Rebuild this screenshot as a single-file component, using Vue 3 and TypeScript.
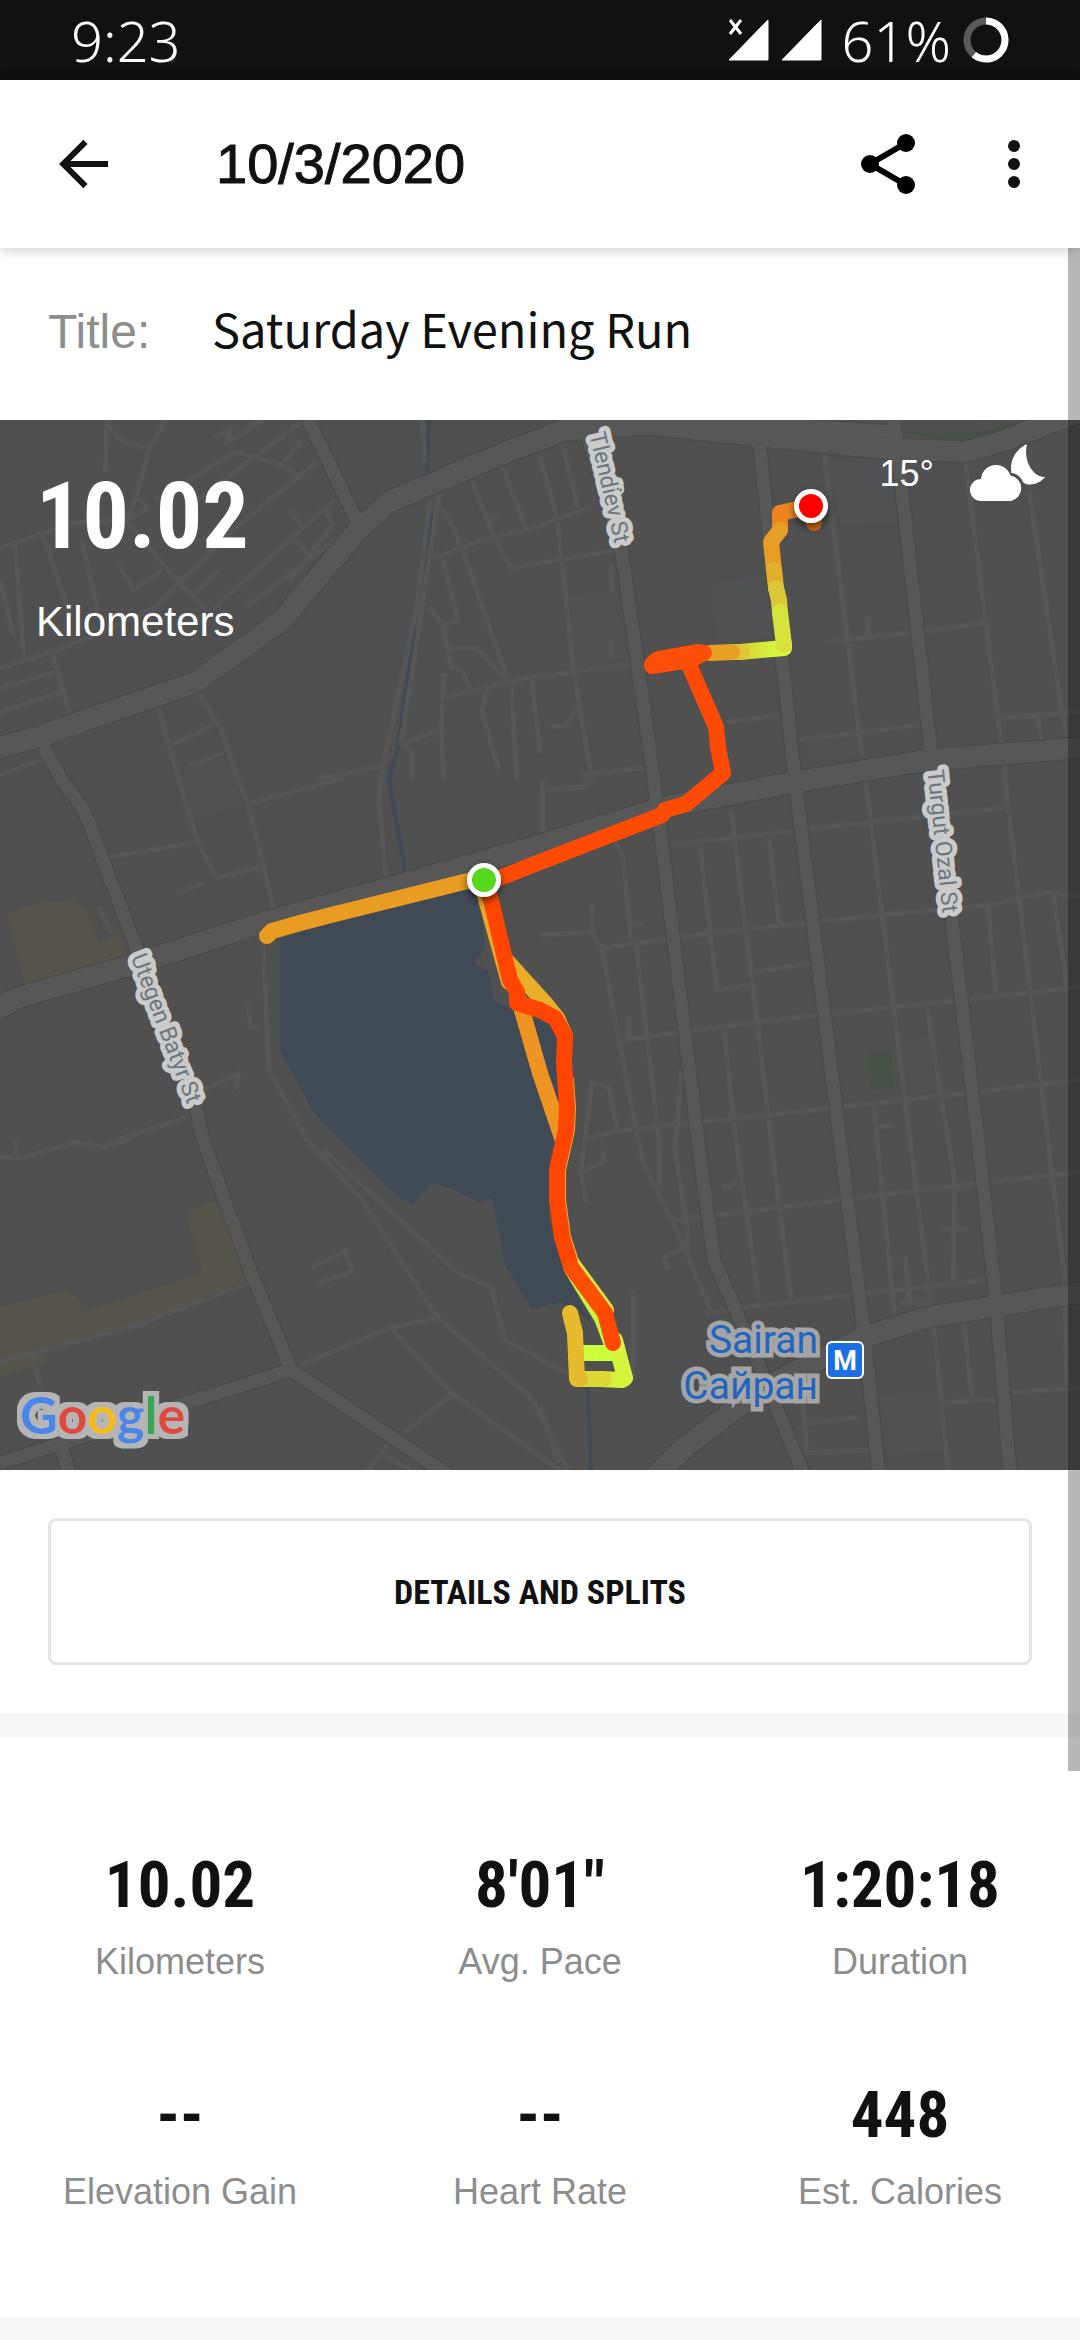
<script setup lang="ts">
import { ref } from 'vue'

interface Stat {
  value: string
  label: string
}

interface Area {
  points: string
  fill: string
}

interface Segment {
  points: string
  color: string
}

const runTitle = ref('Saturday Evening Run')

const stats: Stat[] = [
  { value: '10.02', label: 'Kilometers' },
  { value: '8\'01"', label: 'Avg. Pace' },
  { value: '1:20:18', label: 'Duration' },
  { value: '--', label: 'Elevation Gain' },
  { value: '--', label: 'Heart Rate' },
  { value: '448', label: 'Est. Calories' },
]

const areas: Area[] = [
  { fill: '#57544c', points: '7,913 41,902 72,900 86,910 98,943 121,933 127,957 26,987' },
  {
    fill: '#57544c',
    points: '189,1210 207,1202 219,1203 246,1280 131,1327 0,1360 0,1307 65,1290 77,1297 84,1312 203,1273 189,1223',
  },
  { fill: '#57544c', points: '0,1377 46,1362 45,1353 0,1363' },
  { fill: '#465046', points: '902,432 965,444 1040,424 1050,418 1030,418 978,432' },
  { fill: '#465046', points: '869,1053 891,1052 895,1087 872,1089' },
  { fill: '#4f5153', points: '829,460 892,455 898,523 840,526' },
  { fill: '#4f5153', points: '568,595 621,590 630,660 577,667' },
  { fill: '#4f5153', points: '709,582 770,576 776,636 718,643' },
  { fill: '#4f5153', points: '805,742 855,736 857,756 808,765' },
  { fill: '#4f5153', points: '182,768 226,757 248,805 192,820' },
  { fill: '#4f5153', points: '903,1040 930,1035 936,1090 909,1096' },
  { fill: '#4f5153', points: '880,1395 938,1390 944,1450 888,1456' },
  {
    fill: '#3f4a55',
    points:
      '280,938 480,880 482,917 485,947 474,963 487,970 496,1002 517,1010 554,1027 557,1047 560,1100 550,1160 549,1223 566,1273 592,1325 578,1310 561,1302 540,1307 532,1310 505,1265 492,1198 480,1203 451,1188 432,1183 412,1205 396,1195 341,1140 312,1110 280,1050',
  },
]

const canals: string[] = [
  '429,420 427,472',
  '432,515 420,597 398,747 389,780 406,877',
  '588,1387 591,1470',
]

const lanes: string[] = [
  '107,420 105,472', '108,427 124,442 150,448', '165,420 150,448 136,497 126,520',
  '0,548 72,523 126,520 148,508 136,497', '15,545 24,658', '43,535 69,612', '82,540 98,613',
  '0,580 14,637', '0,668 52,652 96,635 155,607 177,585 241,523 317,462', '52,653 71,717',
  '0,688 55,672', '0,712 62,692', '126,520 179,583 207,610', '117,563 134,590 162,570',
  '155,500 236,452 281,465 301,442', '281,465 298,475', '193,503 300,423',
  '215,607 293,537 334,500', '246,607 351,528', '289,510 303,527', '293,537 312,560',
  '325,507 332,525 289,583', '191,597 220,570', '215,438 231,428 227,443 262,420',
  '422,420 425,463', '439,493 413,667 401,743 412,752 412,780',
  '430,500 417,607 382,770 379,800 386,880', '441,507 455,530 461,550',
  '434,558 482,540 540,527', '443,560 458,620 443,625 429,607', '463,552 508,680',
  '448,648 477,648 508,682 540,675', '446,697 506,683', '443,627 451,667 461,670 470,688',
  '444,673 441,730 444,780', '405,743 439,730', '486,690 482,713 499,770', '511,683 517,780',
  '532,680 540,753', '472,480 492,533 511,568 540,563', '503,467 525,527', '487,520 498,518',
  '158,707 179,780 198,843 217,878 260,867', '196,690 220,727 238,780 248,803 274,910',
  '172,745 213,725', '191,765 224,753', '0,775 41,760', '317,778 382,767',
  '110,857 198,842', '251,803 344,778', '176,893 205,883', '98,907 112,933',
  '263,943 269,1070 307,1140 362,1200 437,1317 530,1397 540,1415 568,1470',
  '324,1150 458,1273 491,1287 505,1340 568,1373', '296,1367 389,1328 437,1318',
  '393,1330 451,1393 560,1470', '451,1395 405,1432', '389,1443 368,1470', '385,1455 410,1470',
  '248,1003 250,1027 260,1027', '203,1090 239,1073 236,1090', '117,1140 188,1117',
  '0,1157 21,1158 77,1142 103,1147 131,1138', '15,1140 17,1157', '0,1362 138,1325 248,1283',
  '31,1353 41,1388', '312,1267 343,1253', '343,1247 353,1272 317,1283',
  '562,443 578,507', '540,457 557,517 574,673 592,780', '540,525 592,507', '540,563 617,550',
  '611,563 612,592', '611,638 611,660', '540,677 633,663', '578,707 566,725 550,727',
  '581,775 643,768', '824,452 862,757', '965,457 1001,743', '1029,490 1065,733',
  '826,642 908,633 986,623', '867,617 869,637', '726,722 779,715', '798,740 920,725',
  '1001,718 1080,712', '1038,717 1041,740', '1005,765 1005,780 1048,1140 1065,1283',
  '540,790 585,787 590,780', '543,780 543,835', '865,775 910,1140 931,1303',
  '671,845 871,822 1005,808', '602,948 712,933 805,923 881,915 988,905 1050,892 1080,897',
  '623,1040 757,1022 895,1007 1080,987', '588,1138 623,1130 767,1115 905,1100 1080,1080',
  '731,810 757,1020 771,1140 791,1300', '700,847 717,990 752,985', '769,838 779,923',
  '754,972 812,963', '616,843 623,857 631,940', '631,925 643,923',
  '592,905 592,933 602,950 638,1140 643,1163 678,1233 712,1313', '540,935 592,932',
  '636,943 659,1140 660,1180 657,1193', '629,1017 629,1040', '724,1030 736,1140 759,1300',
  '988,907 996,993', '1053,893 1067,987', '927,1007 955,1183 953,1280',
  '586,1203 581,1170 592,1083 609,1087 617,1130', '603,1150 604,1162 583,1171',
  '681,1070 675,1150 688,1233 688,1253', '669,1270 664,1257 688,1247', '874,1107 877,1140 895,1317',
  '674,1220 745,1212 840,1200 919,1190 1080,1172', '705,1313 747,1307 850,1295 988,1280',
  '939,1229 969,1229', '905,1255 910,1303', '900,1303 933,1303', '633,1290 633,1380',
  '934,1327 941,1400 948,1470', '945,1402 996,1400', '964,1322 972,1400', '1012,1392 1080,1388',
  '1065,1303 1067,1387', '809,1423 859,1417', '803,1403 807,1453 871,1450', '540,1360 568,1373',
  '540,1407 559,1463', '722,1188 739,1183', '876,1127 894,1125',
]

const streets: string[] = [
  '308,420 358,523',
  '43,746 62,780 84,810 136,947 196,1107 203,1140 251,1273 282,1347 291,1370 448,1475',
  '291,1370 186,1403 0,1463',
  '60,1443 69,1472',
  '585,428 621,547 654,780 698,1140 714,1260 760,1367 804,1475',
  '757,420 795,780 840,1140 864,1333 879,1475',
  '894,420 931,753 951,913 978,1140 996,1300 1010,1475',
  '700,420 898,432',
]

const avenues: string[] = [
  '-10,750 38,737 72,725 196,682 282,620 358,530 389,502 499,455 565,430 650,424 750,435 880,448 965,452 1000,442 1090,408',
  '-10,1014 17,998 131,965 272,920 406,883 540,845 664,807 795,782 929,760 1090,747',
  '655,1477 685,1447 760,1390 864,1337 929,1317 1090,1291',
]

const underRoute: Segment[] = [
  { color: '#e8a828', points: '482,885 509,982' },
  { color: '#e8ae28', points: '506,960 545,1003 557,1018 565,1036' },
  { color: '#ed9422', points: '519,1000 540,1073 562,1138' },
  { color: '#eab02c', points: '566,1080 568,1108 567,1130 558,1170 558,1200 563,1237 572,1265' },
  { color: '#dfe83c', points: '573,1265 606,1310' },
  { color: '#ccf43c', points: '571,1267 602,1318 614,1350' },
  { color: '#ccff3c', points: '580,1353 617,1353' },
  { color: '#d4f43c', points: '615,1340 625,1378' },
  { color: '#d4f43c', points: '625,1378 622,1380 600,1379' },
  { color: '#dcd836', points: '604,1379 578,1379' },
  { color: '#e6bc2e', points: '580,1379 577,1379 575,1333 570,1313' },
]

const mainRoute: Segment[] = [
  { color: '#e99c22', points: '484,877 331,915 300,923 272,931 267,936' },
  {
    color: '#ff4500',
    points:
      '484,880 491,900 510,980 517,992 517,1003 540,1010 555,1018 565,1036 564,1063 567,1107 566,1130 557,1170 557,1200 562,1237 571,1267',
  },
  { color: '#fb5004', points: '571,1267 605,1313' },
  { color: '#ff4800', points: '605,1313 613,1343' },
  {
    color: '#ff4a04',
    points: '484,884 540,862 662,815 665,810 686,804 723,773 718,747 716,727 690,667',
  },
]

const upperRoute: Segment[] = [
  { color: '#d06a1c', points: '811,508 814,523' },
  { color: '#f06c18', points: '811,508 793,510' },
  { color: '#ee8420', points: '793,510 780,513 780,530' },
  { color: '#e69e24', points: '780,530 771,542 774,570' },
  { color: '#e0b02c', points: '774,570 776,588' },
  { color: '#dcc834', points: '776,588 779,600 780,612' },
  { color: '#d8e23c', points: '780,612 784,645' },
  { color: '#dcc834', points: '732,652 742,652' },
  { color: '#e8a024', points: '710,653 732,652' },
  { color: '#ff4e08', points: '652,666 690,660 704,653 697,652 658,659 652,664' },
]
</script>

<template>
  <div class="page">
    <div class="status">
      <span class="clock">9:23</span>
      <div class="status-right">
        <svg class="signals" viewBox="0 0 94 42" aria-hidden="true">
          <path d="M40 1V41H1z M93 1V41H54z" fill="#fff" stroke="#fff" stroke-linejoin="round" />
          <path d="M2 1l11 14M13 1L2 15" stroke="#fff" stroke-width="3" />
        </svg>
        <span class="battery">61%</span>
        <svg class="ring" viewBox="0 0 46 46" aria-hidden="true">
          <circle cx="23" cy="23" r="19" fill="none" stroke="#5a5a5a" stroke-width="7" />
          <circle
            cx="23" cy="23" r="19" fill="none" stroke="#fff" stroke-width="7"
            pathLength="100" stroke-dasharray="61 39" transform="rotate(-90 23 23)"
          />
        </svg>
      </div>
    </div>

    <header class="bar">
      <button class="icon" type="button" aria-label="Back">
        <svg viewBox="0 0 24 24">
          <path d="M12.5 4.6L5.1 12l7.4 7.4M5.1 12H20" fill="none" stroke="#111" stroke-width="2" />
        </svg>
      </button>
      <h1 class="date">10/3/2020</h1>
      <button class="icon" type="button" aria-label="Share">
        <svg viewBox="0 0 24 24">
          <path d="M18 5L6 12l12 7" fill="none" stroke="#000" stroke-width="2" />
          <circle cx="18" cy="5" r="3" />
          <circle cx="6" cy="12" r="3" />
          <circle cx="18" cy="19" r="3" />
        </svg>
      </button>
      <button class="icon more" type="button" aria-label="More options">
        <svg viewBox="0 0 24 24" fill="#111">
          <circle cx="12" cy="6" r="2" />
          <circle cx="12" cy="12" r="2" />
          <circle cx="12" cy="18" r="2" />
        </svg>
      </button>
    </header>

    <main class="content">
      <div class="title-row">
        <label class="title-label" for="run-title">Title:</label>
        <input id="run-title" v-model="runTitle" class="title-input" type="text" />
      </div>

      <section class="map">
        <svg class="map-art" viewBox="0 420 1080 1050" aria-label="Route map">
          <defs>
            <filter id="halo" x="-20%" y="-30%" width="140%" height="160%">
              <feMorphology in="SourceAlpha" operator="dilate" radius="5" result="grown" />
              <feFlood flood-color="#b5b5b5" />
              <feComposite in2="grown" operator="in" result="edge" />
              <feMerge>
                <feMergeNode in="edge" />
                <feMergeNode in="SourceGraphic" />
              </feMerge>
            </filter>
            <filter id="drop" x="-40%" y="-40%" width="180%" height="190%">
              <feDropShadow dx="0" dy="4" stdDeviation="4" flood-color="#000" flood-opacity="0.6" />
            </filter>
            <linearGradient id="east" gradientUnits="userSpaceOnUse" x1="740" y1="652" x2="784" y2="647">
              <stop offset="0" stop-color="#dcd034" />
              <stop offset="1" stop-color="#d2ff3e" />
            </linearGradient>
          </defs>

          <rect x="0" y="420" width="1080" height="1050" fill="#505050" />
          <polygon v-for="(a, i) in areas" :key="`a${i}`" :points="a.points" :fill="a.fill" />
          <g class="line canal">
            <polyline v-for="(p, i) in canals" :key="i" :points="p" />
          </g>
          <g class="line lane">
            <polyline v-for="(p, i) in lanes" :key="i" :points="p" />
          </g>
          <g class="line street-edge">
            <polyline v-for="(p, i) in streets" :key="i" :points="p" />
          </g>
          <g class="line avenue-edge">
            <polyline v-for="(p, i) in avenues" :key="i" :points="p" />
          </g>
          <g class="line street">
            <polyline v-for="(p, i) in streets" :key="i" :points="p" />
          </g>
          <g class="line avenue">
            <polyline v-for="(p, i) in avenues" :key="i" :points="p" />
          </g>

          <g class="road-name">
            <text transform="translate(602 489) rotate(77)">Tlendiev St</text>
            <text transform="translate(159 1031) rotate(69)">Utegen Batyr St</text>
            <text transform="translate(935 842) rotate(84)">Turgut Ozal St</text>
          </g>

          <g class="line route">
            <polyline v-for="(s, i) in underRoute" :key="`u${i}`" :points="s.points" :stroke="s.color" />
            <polyline v-for="(s, i) in mainRoute" :key="`m${i}`" :points="s.points" :stroke="s.color" />
            <polyline points="740,652 784,648 784,645" stroke="url(#east)" />
            <polyline v-for="(s, i) in upperRoute" :key="`t${i}`" :points="s.points" :stroke="s.color" />
          </g>

          <g filter="url(#drop)">
            <circle cx="484" cy="880" r="17" fill="#fff" />
            <circle cx="811" cy="506" r="17" fill="#fff" />
          </g>
          <circle cx="484" cy="880" r="12" fill="#55d81a" />
          <circle cx="811" cy="506" r="12" fill="#f00" />

          <g class="station">
            <text x="818" y="1353">Sairan</text>
            <text x="818" y="1399">Сайран</text>
          </g>
          <rect x="826" y="1341" width="38" height="38" rx="6" fill="#fff" />
          <rect x="828" y="1343" width="34" height="34" rx="4" fill="#1c6fe0" />
          <text class="metro" x="845" y="1370">M</text>

          <text class="google" x="20" y="1434" filter="url(#halo)"><tspan fill="#4a86e8">G</tspan><tspan fill="#de4a3c">o</tspan><tspan fill="#f6bb12">o</tspan><tspan fill="#4a86e8">g</tspan><tspan fill="#3da454">l</tspan><tspan fill="#de4a3c">e</tspan></text>
        </svg>

        <div class="overlay">
          <div class="distance">
            <strong class="distance-value">10.02</strong>
            <span class="distance-unit">Kilometers</span>
          </div>
          <div class="weather">
            <span class="temperature">15°</span>
            <svg class="sky" viewBox="0 0 76 58" aria-label="Partly cloudy night">
              <path
                d="M11 57a11 11 0 0 1 0-22c.6-8 7-14 15-14 7 0 12.500 4.500 14.500 10.500A13 13 0 0 1 41 57z"
                fill="#fff"
              />
              <path
                d="M57 0C46 5 39 17 41.500 29c5 .5 9.500 4 11.500 9 2 2 4 2.500 7 2.500C66 40.500 72 37 75 33 63 33 53 17 57 0z"
                fill="#fff"
              />
            </svg>
          </div>
        </div>
      </section>

      <div class="action">
        <button class="details" type="button">DETAILS AND SPLITS</button>
      </div>

      <dl class="stats">
        <div v-for="s in stats" :key="s.label" class="stat">
          <dt class="stat-label">{{ s.label }}</dt>
          <dd class="stat-value">{{ s.value }}</dd>
        </div>
      </dl>
      <div class="band"></div>
      <div class="thumb"></div>
    </main>
  </div>
</template>

<style>
body {
  margin: 0;
  background: #fff;
}
</style>

<style scoped>
.page {
  display: flex;
  flex-direction: column;
  min-height: 100vh;
  background: #fff;
  color: #111;
  font-family: 'Liberation Sans', sans-serif;
}

.status {
  display: flex;
  align-items: center;
  justify-content: space-between;
  height: 80px;
  padding: 0 71px;
  background: #111;
  color: #fff;
  font-family: 'Noto Sans', sans-serif;
  font-size: 56px;
  font-weight: 300;
  line-height: 80px;
}

.status-right {
  display: flex;
  align-items: center;
}

.signals {
  width: 94px;
  height: 42px;
}

.battery {
  margin: 0 12px 0 20px;
}

.ring {
  width: 46px;
  height: 46px;
}

.bar {
  position: relative;
  z-index: 1;
  display: flex;
  align-items: center;
  height: 168px;
  padding: 0 30px 0 48px;
  background: #fff;
  box-shadow: 0 2px 14px rgba(0, 0, 0, 0.2);
}

.icon {
  width: 72px;
  height: 72px;
  padding: 0;
  border: 0;
  background: none;
}

.icon svg {
  display: block;
  width: 72px;
  height: 72px;
}

.more {
  margin-left: 54px;
}

.date {
  flex: 1;
  margin: 0 0 0 96px;
  font-size: 56px;
  font-weight: 400;
  line-height: 64px;
  -webkit-text-stroke: 1px #111;
}

.content {
  position: relative;
  display: flex;
  flex: 1;
  flex-direction: column;
}

.title-row {
  display: flex;
  align-items: center;
  height: 168px;
  padding: 0 48px 4px;
}

.title-label {
  width: 164px;
  color: #8d8d8d;
  font-size: 48px;
  line-height: 56px;
}

.title-input {
  flex: 1;
  min-width: 0;
  padding: 0 0 8px;
  border: 0;
  background: none;
  color: #111;
  font-family: 'Noto Sans CJK SC', sans-serif;
  font-size: 47px;
  line-height: 72px;
}

.map {
  display: grid;
}

.map-art {
  grid-area: 1 / 1;
  display: block;
  width: 100%;
}

.line polyline {
  fill: none;
  stroke-linejoin: round;
}

.canal polyline {
  stroke: #3f4a55;
  stroke-width: 4px;
}

.lane polyline {
  stroke: #565656;
  stroke-width: 5px;
}

.street-edge polyline {
  stroke: #494949;
  stroke-width: 15px;
}

.avenue-edge polyline {
  stroke: #494949;
  stroke-width: 23px;
}

.street polyline {
  stroke: #575757;
  stroke-width: 13px;
}

.avenue polyline {
  stroke: #575757;
  stroke-width: 21px;
}

.route polyline {
  stroke-width: 16px;
  stroke-linecap: round;
}

.road-name text {
  fill: #6c777d;
  stroke: #cbcbcb;
  stroke-width: 10px;
  stroke-linejoin: round;
  paint-order: stroke;
  font-family: Roboto, sans-serif;
  font-size: 23px;
  text-anchor: middle;
}

.station text {
  fill: #2066c0;
  stroke: #a5a5a5;
  stroke-width: 9px;
  paint-order: stroke;
  font-family: Roboto, sans-serif;
  font-size: 39px;
  text-anchor: end;
}

.metro {
  fill: #fff;
  font-family: Roboto, sans-serif;
  font-size: 27px;
  font-weight: 700;
  text-anchor: middle;
}

.google {
  font-family: Lato, sans-serif;
  font-size: 52px;
  font-weight: 700;
}

.overlay {
  grid-area: 1 / 1;
  z-index: 1;
  display: flex;
  align-items: flex-start;
  justify-content: space-between;
  padding: 24px 34px 24px 36px;
  color: #fff;
}

.distance {
  display: flex;
  flex-direction: column;
}

.distance-value {
  font-family: 'Roboto Condensed', 'Liberation Sans', sans-serif;
  font-size: 92px;
  line-height: 146px;
}

.distance-unit {
  font-size: 42px;
  line-height: 64px;
}

.weather {
  display: flex;
  align-items: flex-end;
  gap: 36px;
}

.temperature {
  font-size: 36px;
  line-height: 56px;
}

.sky {
  width: 76px;
  height: 58px;
}

.action {
  padding: 48px;
  border-bottom: 24px solid #f6f6f6;
}

.details {
  display: block;
  width: 100%;
  height: 147px;
  border: 3px solid #e5e5e5;
  border-radius: 8px;
  background: #fff;
  color: #111;
  font-family: 'Roboto Condensed', 'Liberation Sans', sans-serif;
  font-size: 34px;
  font-weight: 700;
}

.stats {
  display: grid;
  grid-template-columns: repeat(3, 1fr);
  row-gap: 76px;
  margin: 0;
  padding: 98px 0;
}

.stat {
  display: flex;
  flex-direction: column-reverse;
  align-items: center;
}

.stat-value {
  margin: 0;
  font-family: 'Roboto Condensed', 'Liberation Sans', sans-serif;
  font-size: 65px;
  font-weight: 700;
  line-height: 100px;
}

.stat-label {
  color: #8d8d8d;
  font-size: 36px;
  line-height: 54px;
}

.band {
  flex: 1;
  background: #f6f6f6;
}

.thumb {
  position: absolute;
  z-index: 2;
  top: 0;
  right: 0;
  width: 12px;
  height: 1523px;
  background: rgba(0, 0, 0, 0.28);
}
</style>
